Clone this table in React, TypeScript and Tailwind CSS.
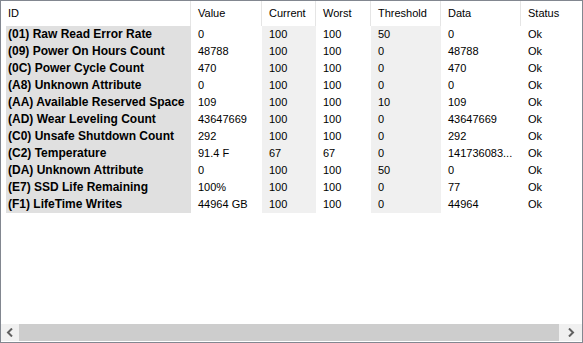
const columns = ["ID", "Value", "Current", "Worst", "Threshold", "Data", "Status"];

const rows: string[][] = [
    ["(01) Raw Read Error Rate", "0", "100", "100", "50", "0", "Ok"],
    ["(09) Power On Hours Count", "48788", "100", "100", "0", "48788", "Ok"],
    ["(0C) Power Cycle Count", "470", "100", "100", "0", "470", "Ok"],
    ["(A8) Unknown Attribute", "0", "100", "100", "0", "0", "Ok"],
    ["(AA) Available Reserved Space", "109", "100", "100", "10", "109", "Ok"],
    ["(AD) Wear Leveling Count", "43647669", "100", "100", "0", "43647669", "Ok"],
    ["(C0) Unsafe Shutdown Count", "292", "100", "100", "0", "292", "Ok"],
    ["(C2) Temperature", "91.4 F", "67", "67", "0", "141736083...", "Ok"],
    ["(DA) Unknown Attribute", "0", "100", "100", "50", "0", "Ok"],
    ["(E7) SSD Life Remaining", "100%", "100", "100", "0", "77", "Ok"],
    ["(F1) LifeTime Writes", "44964 GB", "100", "100", "0", "44964", "Ok"],
];

const grid = "grid grid-cols-[190px_71px_54px_55px_70px_80px_61px]";

const Chevron = ({ dir }: { dir: "left" | "right" }) => (
    <svg width="8" height="9" viewBox="0 0 8 9">
        <path
            d={dir === "left" ? "M6 0.5 L2 4.5 L6 8.5" : "M2 0.5 L6 4.5 L2 8.5"}
            fill="none"
            stroke="#606060"
            strokeWidth="2"
        />
    </svg>
);

export default function App() {
    return (
        <div
            className="w-[583px] h-[343px] border border-[#828790] bg-white flex flex-col text-[11px] text-black"
            style={{ fontFamily: '"Liberation Sans", Arial, sans-serif' }}
        >
            <div className="flex-1 overflow-hidden">
                <div className={`${grid} h-[25px]`}>
                    {columns.map((c, i) => (
                        <div
                            key={c}
                            className={`flex items-center pl-[7px] ${i < columns.length - 1 ? "border-r border-[#e5e5e5]" : ""}`}
                        >
                            {c}
                        </div>
                    ))}
                </div>
                {rows.map((r) => (
                    <div key={r[0]} className={`${grid} h-[17px] leading-[17px]`}>
                        <div className="ml-[5px] pl-[2px] bg-[#e0e0e0] font-bold text-[12px] whitespace-nowrap overflow-hidden">
                            {r[0]}
                        </div>
                        <div className="pl-[7px]">{r[1]}</div>
                        <div className="pl-[7px] bg-[#f0f0f0]">{r[2]}</div>
                        <div className="pl-[7px]">{r[3]}</div>
                        <div className="pl-[7px] bg-[#f0f0f0]">{r[4]}</div>
                        <div className="pl-[7px] whitespace-nowrap">{r[5]}</div>
                        <div className="pl-[7px]">{r[6]}</div>
                    </div>
                ))}
            </div>
            <div className="h-[17px] flex mb-[1px]">
                <div className="w-[18px] bg-[#f0f0f0] flex items-center justify-center">
                    <Chevron dir="left" />
                </div>
                <div className="flex-1 bg-[#cdcdcd]" />
                <div className="w-[23px] bg-[#f0f0f0] flex items-center justify-center">
                    <Chevron dir="right" />
                </div>
            </div>
        </div>
    );
}
